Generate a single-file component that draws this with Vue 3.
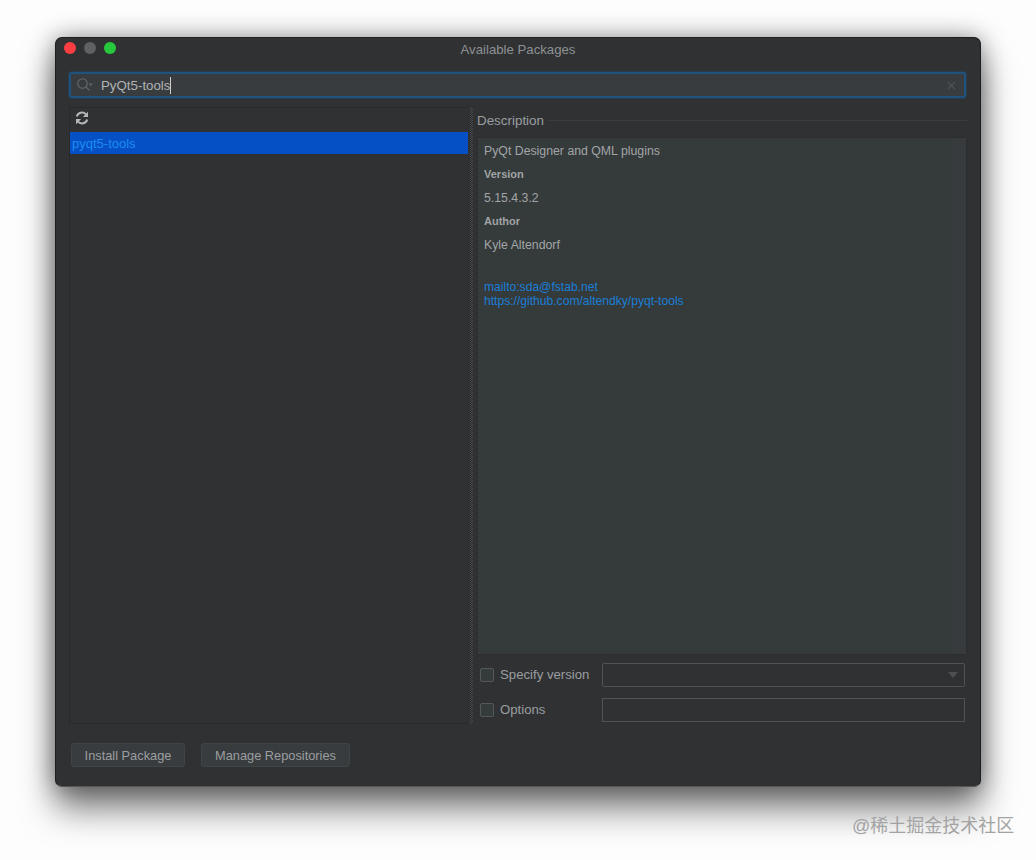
<script setup>
const packages = ['pyqt5-tools']
const links = ['mailto:sda@fstab.net', 'https://github.com/altendky/pyqt-tools']
</script>

<template>
  <div class="page">
    <div class="window">
      <div class="titlebar">
        <div class="lights">
          <span class="light red"></span>
          <span class="light grey"></span>
          <span class="light green"></span>
        </div>
        <span class="title">Available Packages</span>
      </div>

      <div class="search">
        <svg class="search-icon" width="18" height="16" viewBox="0 0 18 16">
          <circle cx="6.5" cy="6.5" r="4.7" fill="none" stroke="#65696b" stroke-width="1.1" />
          <path d="M10 10l3.4 3.4" stroke="#65696b" stroke-width="1.2" />
          <path d="M12.6 6.5h4.2l-2.1 2.4z" fill="#65696b" />
        </svg>
        <span class="search-text">PyQt5-tools</span>
        <span class="caret"></span>
        <svg class="clear" width="9" height="9" viewBox="0 0 9 9">
          <path d="M1 1l7 7M8 1l-7 7" stroke="#4f5355" stroke-width="1.1" />
        </svg>
      </div>

      <div class="split">
        <div class="left">
          <div class="toolbar">
            <svg width="14" height="14" viewBox="0 0 14 14" fill="none" stroke="#b4b7b9" stroke-width="2">
              <path d="M1.8 5.6A5.4 5.4 0 0 1 11 3.4" />
              <path d="M12.2 8.4A5.4 5.4 0 0 1 3 10.6" />
              <path d="M13 0.8v5.2h-5.2z" fill="#b4b7b9" stroke="none" />
              <path d="M1 13.2V8h5.2z" fill="#b4b7b9" stroke="none" />
            </svg>
          </div>
          <ul class="list">
            <li v-for="name in packages" :key="name" class="row">{{ name }}</li>
          </ul>
        </div>

        <div class="splitter"></div>

        <div class="right">
          <div class="legend">
            <span>Description</span>
            <i class="legend-line"></i>
          </div>
          <div class="desc">
            <div class="desc-body">
              <p class="line">PyQt Designer and QML plugins</p>
              <p class="head">Version</p>
              <p class="line">5.15.4.3.2</p>
              <p class="head">Author</p>
              <p class="line">Kyle Altendorf</p>
              <div class="links">
                <a v-for="link in links" :key="link" class="link">{{ link }}</a>
              </div>
            </div>
            <div class="scroll-track"></div>
          </div>
          <div class="field first">
            <label class="check"><span class="box"></span>Specify version</label>
            <div class="input select">
              <svg width="10" height="6" viewBox="0 0 10 6"><path d="M0 0h10L5 6z" fill="#4c5052" /></svg>
            </div>
          </div>
          <div class="field">
            <label class="check"><span class="box"></span>Options</label>
            <div class="input"></div>
          </div>
        </div>
      </div>

      <div class="actions">
        <button class="btn install">Install Package</button>
        <button class="btn manage">Manage Repositories</button>
      </div>
    </div>
    <div class="watermark">@稀土掘金技术社区</div>
  </div>
</template>

<style>
html, body {
  margin: 0;
  background: #fff;
  overflow: hidden;
}
</style>

<style scoped>
.page {
  width: 1036px;
  height: 860px;
  padding: 37px 0 0 55px;
  box-sizing: border-box;
  background: #fdfdfd;
  position: relative;
  overflow: hidden;
  font-family: "Liberation Sans", Arial, sans-serif;
}

.window {
  width: 926px;
  height: 750px;
  box-sizing: border-box;
  padding: 0 13px;
  background: #2f3133;
  border: 1px solid #1d1e1f;
  border-bottom-color: #555759;
  border-radius: 7px;
  box-shadow: 0 22px 34px rgba(0, 0, 0, 0.5), 0 0 24px rgba(0, 0, 0, 0.4);
  display: flex;
  flex-direction: column;
}

.titlebar {
  height: 23px;
  margin-bottom: 1px;
  position: relative;
  display: flex;
  align-items: center;
  justify-content: center;
  flex-shrink: 0;
}

.lights {
  position: absolute;
  left: -5px;
  top: 4px;
  display: flex;
  gap: 8px;
}

.light {
  width: 12px;
  height: 12px;
  border-radius: 50%;
}

.red { background: #fa3e42; }
.grey { background: #5f6164; }
.green { background: #28c83e; }

.title {
  font-size: 13.2px;
  color: #8e9193;
}

.search {
  margin-top: 10px;
  height: 26px;
  width: 897px;
  box-sizing: border-box;
  border: 2px solid #20527e;
  border-radius: 3px;
  box-shadow: 0 0 0 1px rgba(32, 82, 126, 0.35);
  background: #383c3e;
  display: flex;
  align-items: center;
  padding-left: 5px;
  flex-shrink: 0;
}

.search-icon { margin-right: 7px; }

.search-text {
  font-size: 13.3px;
  color: #b0b3b5;
}

.caret {
  width: 1px;
  height: 17px;
  background: #c9cbcc;
}

.clear { margin-left: auto; margin-right: 8px; }

.split {
  display: flex;
  margin-top: 9px;
  height: 617px;
  flex-shrink: 0;
}

.left {
  width: 399px;
  flex-shrink: 0;
  box-sizing: border-box;
  border: 1px solid #282a2b;
  border-right: none;
  display: flex;
  flex-direction: column;
}

.toolbar {
  height: 24px;
  box-sizing: border-box;
  padding: 0 0 4px 5px;
  display: flex;
  align-items: center;
  flex-shrink: 0;
}

.list {
  list-style: none;
  margin: 0;
  padding: 0;
}

.row {
  height: 22px;
  line-height: 23px;
  background: #0650c6;
  color: #1c8cf0;
  font-size: 13px;
  padding-left: 2px;
}

.splitter {
  width: 3px;
  flex-shrink: 0;
  margin-left: 2px;
  margin-right: 3px;
  background: repeating-conic-gradient(#484c4e 0 25%, #292b2c 0 50%) 0 0 / 2px 2px;
}

.right {
  width: 490px;
  flex-shrink: 0;
  margin-left: 1px;
  display: flex;
  flex-direction: column;
}

.legend {
  height: 30px;
  box-sizing: border-box;
  padding-bottom: 4px;
  display: flex;
  align-items: center;
  gap: 4px;
  font-size: 13.4px;
  color: #9b9ea0;
}

.legend-line {
  flex: 1;
  height: 1px;
  background: #3a3d3f;
}

.desc {
  height: 518px;
  box-sizing: border-box;
  border: 1px solid #2b2d2e;
  background: #353a3b;
  display: flex;
}

.desc-body {
  flex: 1;
  padding: 3px 0 0 6px;
  font-size: 12.3px;
  color: #a2a5a7;
}

.line {
  margin: 0;
  height: 23px;
  line-height: 20px;
}

.head {
  margin: 0;
  height: 24px;
  line-height: 21px;
  font-size: 11px;
  font-weight: bold;
  color: #a0a3a5;
}

.links {
  margin-top: 22px;
  display: flex;
  flex-direction: column;
}

.link {
  color: #1a7fd6;
  font-size: 12.1px;
  line-height: 14px;
}

.scroll-track {
  width: 13px;
  background: #373b3d;
}

.field {
  display: flex;
  align-items: center;
  height: 24px;
  margin-top: 11px;
}

.field.first { margin-top: 8px; }

.check {
  width: 125px;
  box-sizing: border-box;
  padding: 0 0 1px 3px;
  display: flex;
  align-items: center;
  gap: 6px;
  font-size: 13.2px;
  color: #9b9ea0;
}

.box {
  width: 12px;
  height: 12px;
  border: 1px solid #54585a;
  border-radius: 2px;
  background: #353a3a;
}

.input {
  width: 363px;
  height: 24px;
  box-sizing: border-box;
  border: 1px solid #505355;
  background: #2f3133;
}

.select {
  border-radius: 2px;
  display: flex;
  align-items: center;
  justify-content: flex-end;
  padding-right: 6px;
}

.actions {
  display: flex;
  gap: 16px;
  margin-top: 19px;
  padding-left: 2px;
}

.btn {
  height: 24px;
  padding: 0;
  box-sizing: border-box;
  border: 1px solid #3f4446;
  border-radius: 3px;
  background: #383c3e;
  color: #9b9ea0;
  font-family: inherit;
  font-size: 12.8px;
}

.install { width: 114px; }
.manage { width: 149px; }

.watermark {
  position: absolute;
  left: 852px;
  top: 816px;
  font-family: "Liberation Sans", "Noto Sans CJK SC", sans-serif;
  font-size: 18px;
  line-height: 21px;
  color: #a3a3a3;
  white-space: nowrap;
}
</style>
